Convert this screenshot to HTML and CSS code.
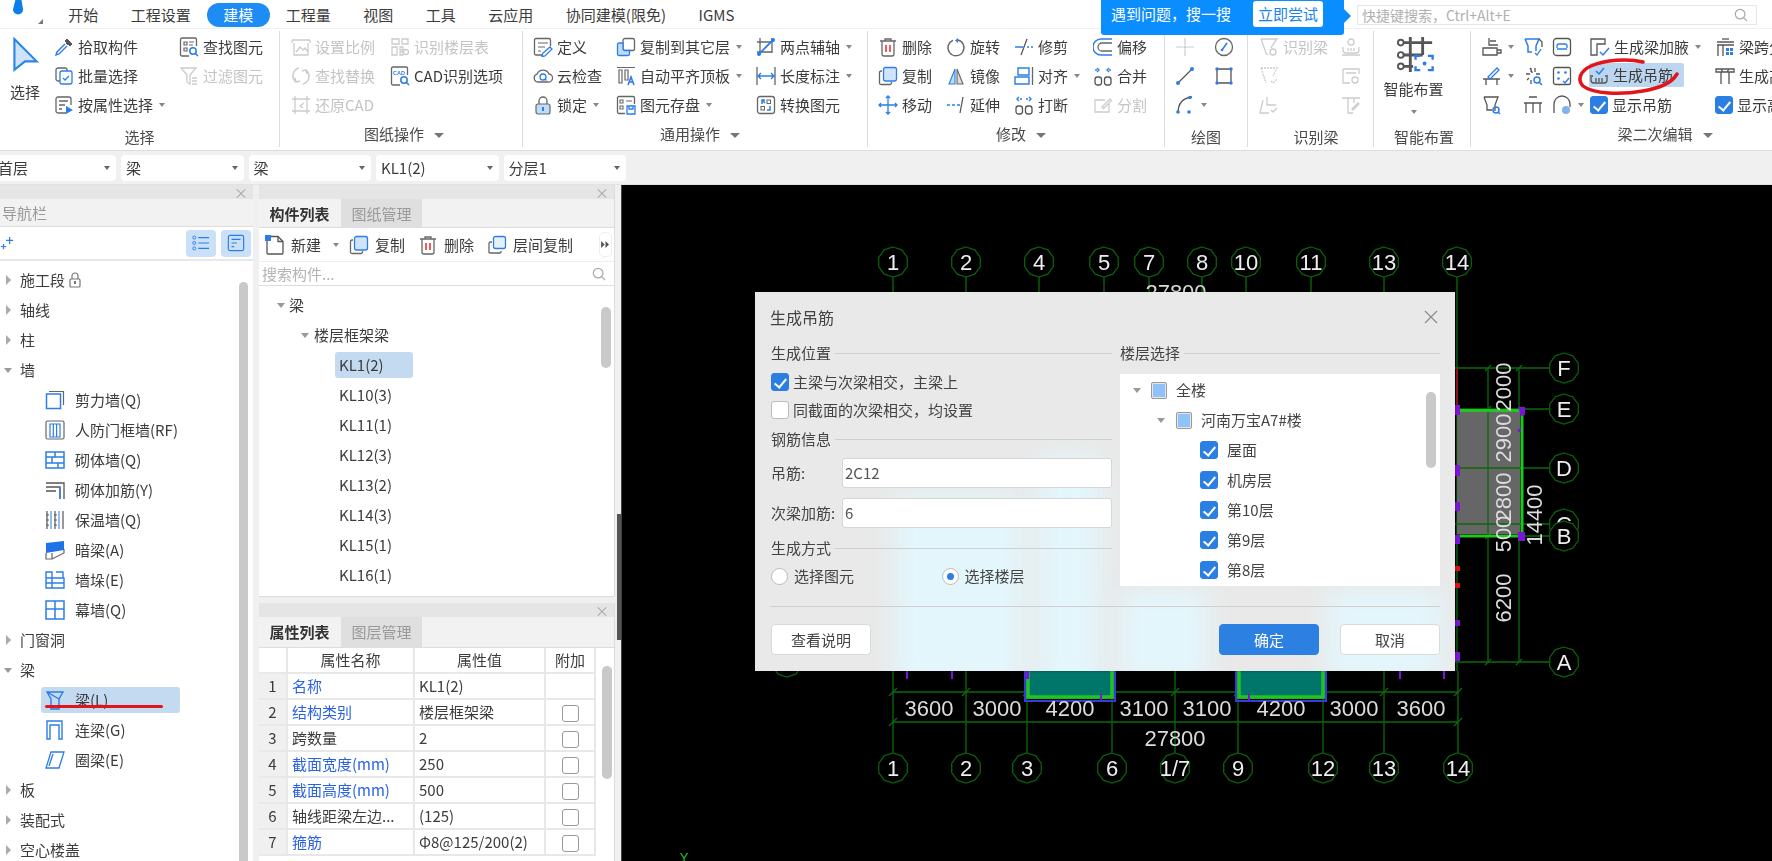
FILE: index.html
```html
<!DOCTYPE html>
<html lang="zh">
<head>
<meta charset="utf-8">
<title>生成吊筋</title>
<link rel="stylesheet" href="styles.css">
</head>
<body>
<svg class="sprite" aria-hidden="true">
<defs>
<symbol id="i-pick" viewBox="0 0 20 20"><path d="M11 4l2-2 5 5-2 2zM12 6l2 2" fill="#555" stroke="#555"/><path d="M11 7l-8 8-1 3 3-1 8-8" fill="none" stroke="#2b7de9" stroke-width="1.4"/></symbol>
<symbol id="i-batch" viewBox="0 0 20 20"><rect x="2" y="2" width="11" height="13" rx="2" fill="none" stroke="#666" stroke-width="1.3"/><rect x="6" y="5" width="12" height="13" rx="2" fill="#fff" stroke="#2b7de9" stroke-width="1.3"/><path d="M9 12l2 2 4-4" fill="none" stroke="#2b7de9" stroke-width="1.3"/></symbol>
<symbol id="i-attr" viewBox="0 0 20 20"><path d="M12 18H4a2 2 0 0 1-2-2V4a2 2 0 0 1 2-2h11a2 2 0 0 1 2 2v6" fill="none" stroke="#666" stroke-width="1.3"/><path d="M5 6h9M5 10h6M5 14h3" stroke="#666" stroke-width="1.3"/><path d="M12 11l7 4-7 4z" fill="#2b7de9"/></symbol>
<symbol id="i-find" viewBox="0 0 20 20"><path d="M10 19H3a1.500 1.500 0 0 1-1.500-1.500V2.500A1.500 1.500 0 0 1 3 1h13a1.500 1.500 0 0 1 1.500 1.500V9" fill="none" stroke="#666" stroke-width="1.3"/><path d="M5 5h3v3H5zM10 5h5M5 11h3v3H5zM10 8h4" fill="none" stroke="#666" stroke-width="1.2"/><circle cx="14" cy="14" r="3.200" fill="none" stroke="#2b7de9" stroke-width="1.500"/><path d="M16 16l3 3" stroke="#2b7de9" stroke-width="1.500"/></symbol>
<symbol id="i-filter" viewBox="0 0 20 20"><path d="M2 2h15l-6 7v9l-3-2V9z M13 12h5M13 15h5M13 18h5" fill="none" stroke="#ccc" stroke-width="1.3"/></symbol>
<symbol id="i-scale" viewBox="0 0 20 20"><path d="M1 3h18M1 3v3M19 3v3M3 6v12h14V6M5 15l4-5 3 3 2-2 3 4" fill="none" stroke="#ccc" stroke-width="1.3"/></symbol>
<symbol id="i-ltable" viewBox="0 0 20 20"><path d="M2 2h7v5H2zM12 2h6v5h-6zM2 10h5v8H2zM10 10h3v3h-3zM10 15h3v3h-3z" fill="none" stroke="#ccc" stroke-width="1.3"/><circle cx="16" cy="15" r="2.500" fill="none" stroke="#ccc" stroke-width="1.3"/></symbol>
<symbol id="i-replace" viewBox="0 0 20 20"><path d="M8 2a8 8 0 0 0-3 14M12 18a8 8 0 0 0 3-14M4 12l1 4 4-1M16 8l-1-4-4 1" fill="none" stroke="#ccc" stroke-width="1.5"/></symbol>
<symbol id="i-restore" viewBox="0 0 20 20"><path d="M4 1v18M16 1v18M1 4h18M1 16h18M13 8l-4 3 3 2" fill="none" stroke="#ccc" stroke-width="1.3"/></symbol>
<symbol id="i-cad" viewBox="0 0 20 20"><path d="M10 19H3a1.500 1.500 0 0 1-1.500-1.500V2.500A1.500 1.500 0 0 1 3 1h13a1.500 1.500 0 0 1 1.500 1.500V9" fill="none" stroke="#666" stroke-width="1.3"/><text x="3" y="8.500" font-family="Liberation Sans" font-size="5.500" font-weight="700" fill="#2b7de9">CAD</text><circle cx="14" cy="14" r="3.200" fill="none" stroke="#2b7de9" stroke-width="1.500"/><path d="M16 16l3 3" stroke="#2b7de9" stroke-width="1.500"/></symbol>
<symbol id="i-def" viewBox="0 0 20 20"><path d="M9 18H3a1.500 1.500 0 0 1-1.500-1.500V3A1.500 1.500 0 0 1 3 1.500h13A1.500 1.500 0 0 1 17.500 3v6" fill="none" stroke="#666" stroke-width="1.3"/><path d="M5 6h10M5 10h7M5 14h3" stroke="#666" stroke-width="1.2"/><path d="M17 10l2 2-7 7-3 .5.5-3z" fill="none" stroke="#2b7de9" stroke-width="1.300"/></symbol>
<symbol id="i-cloud" viewBox="0 0 20 20"><path d="M5 16a4 4 0 0 1-1-7.800A6.500 6.500 0 0 1 16 8a4 4 0 0 1-1 8z" fill="none" stroke="#666" stroke-width="1.3"/><circle cx="10" cy="11" r="3" fill="none" stroke="#2b7de9" stroke-width="1.300"/><path d="M12 13l1.500 1.500" stroke="#2b7de9" stroke-width="1.300"/></symbol>
<symbol id="i-lock" viewBox="0 0 20 20"><path d="M6 9V6a4 4 0 0 1 8 0v3" fill="none" stroke="#666" stroke-width="1.3"/><rect x="3" y="9" width="14" height="10" rx="2" fill="#bfdcf8" stroke="#666" stroke-width="1.200"/><rect x="9" y="12" width="2" height="4" fill="#2b7de9"/></symbol>
<symbol id="i-copy" viewBox="0 0 20 20"><path d="M4 5H3a1.500 1.500 0 0 0-1.500 1.500V17A1.500 1.500 0 0 0 3 18.500h9a1.500 1.500 0 0 0 1.500-1.500v-1" fill="none" stroke="#666" stroke-width="1.3"/><rect x="5.500" y="1.500" width="13" height="13.500" rx="2" fill="#cfe4fa" stroke="#2b7de9" stroke-width="1.300"/></symbol>
<symbol id="i-copyto" viewBox="0 0 20 20"><rect x="7" y="1.500" width="11.500" height="12" rx="2" fill="#fff" stroke="#666" stroke-width="1.300"/><path d="M7 6H3a1.500 1.500 0 0 0-1.500 1.500V17A1.500 1.500 0 0 0 3 18.500h9a1.500 1.500 0 0 0 1.500-1.500v-3.500H8.500A1.500 1.500 0 0 1 7 12z" fill="#bfdcf8" stroke="#2b7de9" stroke-width="1.300"/></symbol>
<symbol id="i-top" viewBox="0 0 20 20"><path d="M1 1.500h18M3 4h3v13H3zM9 4h3v10H9z" fill="none" stroke="#666" stroke-width="1.200"/><path d="M12 19l3-8 3 8M13.200 16h3.600" fill="none" stroke="#2b7de9" stroke-width="1.600"/></symbol>
<symbol id="i-save" viewBox="0 0 20 20"><path d="M9 18.500H3A1.500 1.500 0 0 1 1.500 17V3A1.500 1.500 0 0 1 3 1.500h14A1.500 1.500 0 0 1 18.500 3v6" fill="none" stroke="#666" stroke-width="1.3"/><path d="M4 5h3v3H4zM10 6h6M4 11h3v3H4z" fill="none" stroke="#666" stroke-width="1.100"/><path d="M11 11h8v8h-8zM13 11v3h4v-3" fill="none" stroke="#2b7de9" stroke-width="1.300"/></symbol>
<symbol id="i-two" viewBox="0 0 20 20"><path d="M1 5h15M4 1v15M1 15h15M16 1v15" fill="none" stroke="#666" stroke-width="1.300"/><path d="M2 18L18 2" stroke="#2b7de9" stroke-width="1.800"/><circle cx="17" cy="3" r="2" fill="#2b7de9"/><circle cx="3" cy="17" r="2" fill="#2b7de9"/></symbol>
<symbol id="i-dim" viewBox="0 0 20 20"><path d="M1 1v18M19 1v18" stroke="#666" stroke-width="1.300"/><path d="M2 10h16M5 7l-3 3 3 3M15 7l3 3-3 3" fill="none" stroke="#2b7de9" stroke-width="1.400"/></symbol>
<symbol id="i-conv" viewBox="0 0 20 20"><rect x="1.500" y="1.500" width="17" height="17" rx="2.500" fill="none" stroke="#666" stroke-width="1.300"/><path d="M9 5H6v4M6 5l3 3M11 15h3v-4" fill="none" stroke="#2b7de9" stroke-width="1.500"/><rect x="11" y="5" width="3.500" height="3.500" fill="none" stroke="#666"/><rect x="5" y="11.500" width="3.500" height="3.500" fill="none" stroke="#666"/></symbol>
<symbol id="i-del" viewBox="0 0 20 20"><path d="M2 4h16M7 4V2h6v2M4 4v13a2 2 0 0 0 2 2h8a2 2 0 0 0 2-2V4" fill="none" stroke="#666" stroke-width="1.300"/><path d="M8 8v7M12 8v7" stroke="#e33" stroke-width="1.600"/></symbol>
<symbol id="i-rot" viewBox="0 0 20 20"><path d="M12 3a8 8 0 1 1-5 .3" fill="none" stroke="#666" stroke-width="1.300"/><path d="M12 1l-3 2.500 3 2.500z" fill="#2b7de9"/></symbol>
<symbol id="i-trim" viewBox="0 0 20 20"><path d="M1 10h8" stroke="#2b7de9" stroke-width="1.500"/><path d="M13 2L7 18" stroke="#555" stroke-width="1.300"/><path d="M13 10h2M17 10h2" stroke="#2b7de9" stroke-width="1.500"/></symbol>
<symbol id="i-off" viewBox="0 0 20 20"><path d="M19 2H8a7.500 7.500 0 0 0 0 16h11" fill="none" stroke="#2b7de9" stroke-width="1.400"/><path d="M19 6H9a4 4 0 0 0 0 8h10" fill="none" stroke="#666" stroke-width="1.300"/></symbol>
<symbol id="i-mir" viewBox="0 0 20 20"><path d="M9 3L3 18h6z" fill="#bfdcf8" stroke="#2b7de9" stroke-width="1.100"/><path d="M11 3l6 15h-6z" fill="#ddd" stroke="#666" stroke-width="1.100"/></symbol>
<symbol id="i-align" viewBox="0 0 20 20"><path d="M4 2h11v7H4zM1 11h14v7H1z" fill="none" stroke="#2b7de9" stroke-width="1.400"/><path d="M18.500 1v18" stroke="#666" stroke-width="1.300"/></symbol>
<symbol id="i-merge" viewBox="0 0 20 20"><rect x="2" y="11" width="6.500" height="8" rx="2.500" fill="none" stroke="#555" stroke-width="1.300"/><rect x="11.500" y="11" width="6.500" height="8" rx="2.500" fill="none" stroke="#555" stroke-width="1.300"/><path d="M4 2l2 2-2 2M16 2l-2 2 2 2M2 4h2M18 4h-2" fill="none" stroke="#2b7de9" stroke-width="1.400"/></symbol>
<symbol id="i-move" viewBox="0 0 20 20"><path d="M10 1v18M1 10h18M8 3l2-2 2 2M8 17l2 2 2-2M3 8l-2 2 2 2M17 8l2 2-2 2" fill="none" stroke="#2b7de9" stroke-width="1.300"/></symbol>
<symbol id="i-ext" viewBox="0 0 20 20"><path d="M1 10h3M6 10h3M11 10h3" stroke="#2b7de9" stroke-width="1.500"/><path d="M17 2l-3 16" stroke="#555" stroke-width="1.300"/></symbol>
<symbol id="i-break" viewBox="0 0 20 20"><rect x="2" y="11" width="6.500" height="8" rx="2.500" fill="none" stroke="#555" stroke-width="1.300"/><rect x="11.500" y="11" width="6.500" height="8" rx="2.500" fill="none" stroke="#555" stroke-width="1.300"/><path d="M5 2L3 4l2 2M15 2l2 2-2 2M6 4h2M14 4h-2" fill="none" stroke="#2b7de9" stroke-width="1.400"/></symbol>
<symbol id="i-split" viewBox="0 0 20 20"><path d="M12 5H2v12h14V9M9 12l8-8 1.500 1.500-8 8z" fill="none" stroke="#ccc" stroke-width="1.300"/></symbol>
<symbol id="i-cross" viewBox="0 0 20 20"><path d="M1 10h7M12 10h7M10 1v7M10 12v7" stroke="#ccc" stroke-width="1.200"/><circle cx="10" cy="10" r="1.500" fill="#ccc"/></symbol>
<symbol id="i-dial" viewBox="0 0 20 20"><circle cx="10" cy="10" r="8.500" fill="none" stroke="#666" stroke-width="1.300"/><path d="M8 13l5-7" stroke="#2b7de9" stroke-width="1.500"/><circle cx="8" cy="13" r="1.300" fill="#2b7de9"/></symbol>
<symbol id="i-line" viewBox="0 0 20 20"><path d="M3 17L17 3" stroke="#555" stroke-width="1.300"/><circle cx="3" cy="17" r="2" fill="#2b7de9"/><circle cx="17" cy="3" r="2" fill="#2b7de9"/></symbol>
<symbol id="i-rect" viewBox="0 0 20 20"><rect x="3" y="3" width="14" height="14" rx="1.500" fill="none" stroke="#555" stroke-width="1.300"/><circle cx="3" cy="3" r="1.700" fill="#2b7de9"/><circle cx="17" cy="3" r="1.700" fill="#2b7de9"/><circle cx="3" cy="17" r="1.700" fill="#2b7de9"/><circle cx="17" cy="17" r="1.700" fill="#2b7de9"/></symbol>
<symbol id="i-arc" viewBox="0 0 20 20"><path d="M3 18C3 8 8 3 17 2" fill="none" stroke="#555" stroke-width="1.300"/><circle cx="3" cy="17" r="1.800" fill="#2b7de9"/><circle cx="15" cy="2.500" r="1.800" fill="#2b7de9"/><circle cx="14" cy="17" r="1.800" fill="#2b7de9"/></symbol>
<symbol id="i-recb" viewBox="0 0 20 20"><path d="M2 2h16l-5 7-1 2M2 2l5 14 2 2" fill="none" stroke="#ccc" stroke-width="1.300"/><circle cx="14" cy="15" r="3" fill="none" stroke="#ccc" stroke-width="1.300"/></symbol>
<symbol id="i-recd" viewBox="0 0 20 20"><path d="M2 2h16l-4 8M2 2l5 15M12 15l2 2 4-4" fill="none" stroke="#ccc" stroke-dasharray="2 1" stroke-width="1.300"/></symbol>
<symbol id="i-rece" viewBox="0 0 20 20"><path d="M8 2v8h9M4 5L1 18h9M12 15l2 2 4-4" fill="none" stroke="#ccc" stroke-width="1.300"/></symbol>
<symbol id="i-rech" viewBox="0 0 20 20"><circle cx="10" cy="5" r="3" fill="none" stroke="#ccc" stroke-width="1.300"/><path d="M2 10v3a3 3 0 0 0 3 3h10a3 3 0 0 0 3-3v-3M1 18h18M7 11v3M10 11v3M13 11v3" fill="none" stroke="#ccc" stroke-width="1.300"/></symbol>
<symbol id="i-recq" viewBox="0 0 20 20"><path d="M2 3h16v5M2 3v14h7M5 7h10" fill="none" stroke="#ccc" stroke-width="1.300"/><circle cx="14" cy="14" r="3" fill="none" stroke="#ccc" stroke-width="1.300"/></symbol>
<symbol id="i-rect2" viewBox="0 0 20 20"><path d="M1 3h18M7 3v15h5M13 3v5M11 14l6-6 1 1-6 6z" fill="none" stroke="#ccc" stroke-width="1.300"/></symbol>
<symbol id="i-smart" viewBox="0 0 40 40"><path d="M5 8h32M5 21h22M5 33h12M14 2v37M27 2v19" fill="none" stroke="#555" stroke-width="3"/><circle cx="4" cy="8" r="3" fill="#fff" stroke="#555" stroke-width="2"/><circle cx="4" cy="21" r="3" fill="#fff" stroke="#555" stroke-width="2"/><circle cx="4" cy="33" r="3" fill="#fff" stroke="#555" stroke-width="2"/><path d="M20 28v-4h5M33 24h5v4M38 35v4h-5M25 39h-5v-4" transform="translate(-.5 -2)" fill="none" stroke="#2b7de9" stroke-width="2.500"/><circle cx="29" cy="30" r="2" fill="#2b7de9"/></symbol>
<symbol id="i-e1" viewBox="0 0 20 20"><path d="M7 1v7h9M8 4h6" fill="none" stroke="#555" stroke-width="1.300"/><path d="M1 11h14v7H1zM15 13h4v3h-4z" fill="none" stroke="#555" stroke-width="1.300"/></symbol>
<symbol id="i-e2" viewBox="0 0 20 20"><path d="M2 2h14l-3 7v5M2 2l3 7v6h4" fill="none" stroke="#2b7de9" stroke-width="1.500"/><path d="M12 16l2 2 4-6" fill="none" stroke="#2b7de9" stroke-width="1.300"/><path d="M16 2l3 3v5" fill="none" stroke="#555" stroke-width="1.300"/></symbol>
<symbol id="i-e3" viewBox="0 0 20 20"><rect x="1.500" y="1.500" width="17" height="17" rx="3" fill="none" stroke="#555" stroke-width="1.300"/><path d="M5 11V9a2 2 0 0 1 2-2h6a2 2 0 0 1 2 2v2M5 12h10" fill="none" stroke="#2b7de9" stroke-width="1.300"/></symbol>
<symbol id="i-e4" viewBox="0 0 20 20"><path d="M1 2h14v5H7v11H1zM7 7v11" fill="none" stroke="#555" stroke-width="1.300"/><path d="M10 15l3 3 6-7" fill="none" stroke="#2b7de9" stroke-width="1.500"/></symbol>
<symbol id="i-e5" viewBox="0 0 20 20"><path d="M2 5h17M2 8h17M3 8v11M8 8v11" fill="none" stroke="#555" stroke-width="1.300"/><path d="M7 2h7" stroke="#555" stroke-width="1.300"/><path d="M11 11h3v3h-3zM15 11h3v3h-3zM11 15h3v3h-3zM15 15h3v3h-3z" fill="#2b7de9"/></symbol>
<symbol id="i-e6" viewBox="0 0 20 20"><path d="M1 13h17M4 13v6M15 13v6" fill="none" stroke="#555" stroke-width="1.300"/><path d="M6 11l9-9 2 2-9 9z" fill="none" stroke="#2b7de9" stroke-width="1.300"/></symbol>
<symbol id="i-e7" viewBox="0 0 20 20"><path d="M7 2l2 4-1 0 M3 8h4M13 8h4M8 2v4M12 2v4M8 14v4M4 14l2-2" fill="none" stroke="#555" stroke-width="1.300"/><circle cx="14" cy="14" r="3" fill="none" stroke="#2b7de9" stroke-width="1.500"/><path d="M16 16l3 3" stroke="#2b7de9" stroke-width="1.500"/></symbol>
<symbol id="i-e8" viewBox="0 0 20 20"><rect x="1.500" y="1.500" width="17" height="17" rx="2" fill="none" stroke="#555" stroke-width="1.300"/><circle cx="6.500" cy="6.500" r="1.300" fill="#2b7de9"/><circle cx="13.500" cy="6.500" r="1.300" fill="#2b7de9"/><circle cx="6.500" cy="12.500" r="1.300" fill="#2b7de9"/><path d="M11 15l2 2 4-5" fill="#fff" stroke="#2b7de9" stroke-width="1.400"/></symbol>
<symbol id="i-hang" viewBox="0 0 20 20"><path d="M2 12v3a3 3 0 0 0 3 3h10a3 3 0 0 0 3-3v-3M7 13v4M10 13v4M13 13v4M1 11h3M16 11h3" fill="none" stroke="#555" stroke-width="1.300"/><path d="M7 6l3 3 5-6" fill="none" stroke="#2b7de9" stroke-width="1.500"/></symbol>
<symbol id="i-e9" viewBox="0 0 20 20"><path d="M1 3h18v3H1zM4 6h12M6 6v12M14 6v12M6 3l2 3M14 3l-2 3" fill="none" stroke="#555" stroke-width="1.300"/></symbol>
<symbol id="i-e10" viewBox="0 0 20 20"><path d="M2 2h14l-3 8v6M2 2l3 8v5h5" fill="none" stroke="#555" stroke-width="1.300"/><circle cx="14" cy="15" r="3" fill="none" stroke="#2b7de9" stroke-width="1.500"/><path d="M16 17l2 2" stroke="#2b7de9" stroke-width="1.500"/></symbol>
<symbol id="i-e11" viewBox="0 0 20 20"><path d="M1 8h18M6 2h8M3 8v10M10 8v10M17 8v10" fill="none" stroke="#555" stroke-width="1.300"/></symbol>
<symbol id="i-e12" viewBox="0 0 20 20"><path d="M2 18V9a8 8 0 0 1 16 0v3" fill="none" stroke="#555" stroke-width="1.300"/><circle cx="14" cy="15" r="4" fill="#7fb3ee"/></symbol>
<symbol id="n-shear" viewBox="0 0 20 20"><rect x="1.500" y="4" width="14" height="14.500" fill="none" stroke="#2b7de9" stroke-width="1.500"/><path d="M4 1.500h14.500V15" fill="none" stroke="#666" stroke-width="1.200"/></symbol>
<symbol id="n-civil" viewBox="0 0 20 20"><rect x="1" y="1" width="18" height="18" rx="1.500" fill="none" stroke="#666" stroke-width="1.200"/><path d="M5 4h10v13H5zM8.300 4v13M11.600 4v13" fill="none" stroke="#2b7de9" stroke-width="1.200"/></symbol>
<symbol id="n-brick" viewBox="0 0 20 20"><path d="M1 2h18v16H1zM1 7h18M1 13h18M10 2v5M7 7v6M13 13v5" fill="none" stroke="#2b7de9" stroke-width="1.500"/></symbol>
<symbol id="n-rebar" viewBox="0 0 20 20"><path d="M1 3h18v16M1 7h14v12M1 11h10" fill="none" stroke="#555" stroke-width="1.300"/><path d="M15 7v12" stroke="#2b7de9" stroke-width="1.300"/></symbol>
<symbol id="n-ins" viewBox="0 0 20 20"><path d="M2 1v18M10 1v18M18 1v18" stroke="#555" stroke-width="1.200"/><path d="M1 5h3M1 10h3M1 15h3M9 5h3M9 10h3M9 15h3" stroke="#555" stroke-width="1"/><path d="M6 1v18M14 1v18" stroke="#2b7de9" stroke-width="1"/></symbol>
<symbol id="n-hide" viewBox="0 0 20 20"><path d="M1 3l18-2v9L1 13z" fill="#1f73e6"/><path d="M1 13v6h6l12-6V9M7 13v6" fill="none" stroke="#666" stroke-width="1.200"/></symbol>
<symbol id="n-pier" viewBox="0 0 20 20"><path d="M1 2h6v6H1zM11 2h7v6M1 8h18v10H1zM7 8v10M1 13h18" fill="none" stroke="#2b7de9" stroke-width="1.400"/></symbol>
<symbol id="n-curt" viewBox="0 0 20 20"><path d="M1 1h18v18H1zM1 9h18M10 1v18" fill="none" stroke="#2b7de9" stroke-width="1.500"/></symbol>
<symbol id="n-beam" viewBox="0 0 20 20"><path d="M2 2h16l-4 7v10H6V9z M2 2l12 7" fill="none" stroke="#2b7de9" stroke-width="1.400"/></symbol>
<symbol id="n-lint" viewBox="0 0 20 20"><path d="M2 19V1h15v18h-3V5H5v14z" fill="none" stroke="#2b7de9" stroke-width="1.400"/></symbol>
<symbol id="n-ring" viewBox="0 0 20 20"><path d="M6 2h13l-5 16H1zM8 4L4 16" fill="none" stroke="#2b7de9" stroke-width="1.300"/></symbol>
<symbol id="t-new" viewBox="0 0 20 20"><path d="M4 1.500h9l5 5V18a1 1 0 0 1-1 1H3a1 1 0 0 1-1-1V3" fill="none" stroke="#555" stroke-width="1.300"/><path d="M13 1.500v5h5" fill="none" stroke="#555" stroke-width="1.300"/><rect x="0" y="0" width="6" height="6" fill="#2b7de9"/></symbol>
<symbol id="t-lay" viewBox="0 0 20 20"><path d="M5 7H3.500A1.500 1.500 0 0 0 2 8.500V17a1 1 0 0 0 1 1h10a1 1 0 0 0 1-1v-1M2 10v8" fill="none" stroke="#666" stroke-width="1.300"/><rect x="6.500" y="1.500" width="12" height="12" rx="2" fill="#e6f0fb" stroke="#2b7de9" stroke-width="1.300"/></symbol>
<symbol id="g-bub" viewBox="-16 -16 32 32"><polygon points="0,-15 8.800,-12.100 14.300,-4.600 14.300,4.600 8.800,12.100 0,15 -8.800,12.100 -14.300,4.600 -14.300,-4.600 -8.800,-12.100" fill="#000" stroke="#0b5f0b" stroke-width="1.300"/></symbol>
</defs>
</svg>

<div class="app">
  <header class="tabbar">
    <div class="logo"><svg class="drop" viewBox="0 0 12 22"><path d="M3 0h6l2 12a5.500 5.500 0 0 1-11 0z" fill="#0b7fe8"/></svg><span class="corner"></span></div>
    <span class="tab">开始</span><span class="tab">工程设置</span><span class="tab active">建模</span><span class="tab">工程量</span><span class="tab">视图</span><span class="tab">工具</span><span class="tab">云应用</span><span class="tab">协同建模(限免)</span><span class="tab">IGMS</span>
    <div class="quick"><span>快捷键搜索，Ctrl+Alt+E</span><svg class="mag" viewBox="0 0 16 16"><circle cx="7" cy="7" r="5.500"/><path d="M11 11l4 4"/></svg></div>
  </header>

  <div class="ribbon">
    <section class="group g1">
      <div class="grid">
        <div class="big"><svg class="arrow" viewBox="0 0 26 34"><path d="M3 2l21 21-11 0-10 8z" fill="#cfe4fa" stroke="#2b85e9" stroke-width="2"/></svg><span>选择</span></div>
        <div class="ri"><svg class="ic"><use href="#i-pick"/></svg>拾取构件</div>
        <div class="ri"><svg class="ic"><use href="#i-batch"/></svg>批量选择</div>
        <div class="ri"><svg class="ic"><use href="#i-attr"/></svg>按属性选择<i class="car"></i></div>
        <div class="ri"><svg class="ic"><use href="#i-find"/></svg>查找图元</div>
        <div class="ri off"><svg class="ic"><use href="#i-filter"/></svg>过滤图元</div>
      </div>
      <div class="lbl low">选择</div>
    </section>
    <section class="group g2">
      <div class="grid">
        <div class="ri off"><svg class="ic"><use href="#i-scale"/></svg>设置比例</div>
        <div class="ri off"><svg class="ic"><use href="#i-replace"/></svg>查找替换</div>
        <div class="ri off"><svg class="ic"><use href="#i-restore"/></svg>还原CAD</div>
        <div class="ri off"><svg class="ic"><use href="#i-ltable"/></svg>识别楼层表</div>
        <div class="ri"><svg class="ic"><use href="#i-cad"/></svg>CAD识别选项</div>
      </div>
      <div class="lbl">图纸操作<i class="car dark"></i></div>
    </section>
    <section class="group g3">
      <div class="grid">
        <div class="ri"><svg class="ic"><use href="#i-def"/></svg>定义</div>
        <div class="ri"><svg class="ic"><use href="#i-cloud"/></svg>云检查</div>
        <div class="ri"><svg class="ic"><use href="#i-lock"/></svg>锁定<i class="car"></i></div>
        <div class="ri"><svg class="ic"><use href="#i-copyto"/></svg>复制到其它层<i class="car"></i></div>
        <div class="ri"><svg class="ic"><use href="#i-top"/></svg>自动平齐顶板<i class="car"></i></div>
        <div class="ri"><svg class="ic"><use href="#i-save"/></svg>图元存盘<i class="car"></i></div>
        <div class="ri"><svg class="ic"><use href="#i-two"/></svg>两点辅轴<i class="car"></i></div>
        <div class="ri"><svg class="ic"><use href="#i-dim"/></svg>长度标注<i class="car"></i></div>
        <div class="ri"><svg class="ic"><use href="#i-conv"/></svg>转换图元</div>
      </div>
      <div class="lbl">通用操作<i class="car dark"></i></div>
    </section>
    <section class="group g4">
      <div class="grid">
        <div class="ri"><svg class="ic"><use href="#i-del"/></svg>删除</div>
        <div class="ri"><svg class="ic"><use href="#i-copy"/></svg>复制</div>
        <div class="ri"><svg class="ic"><use href="#i-move"/></svg>移动</div>
        <div class="ri"><svg class="ic"><use href="#i-rot"/></svg>旋转</div>
        <div class="ri"><svg class="ic"><use href="#i-mir"/></svg>镜像</div>
        <div class="ri"><svg class="ic"><use href="#i-ext"/></svg>延伸</div>
        <div class="ri"><svg class="ic"><use href="#i-trim"/></svg>修剪</div>
        <div class="ri"><svg class="ic"><use href="#i-align"/></svg>对齐<i class="car"></i></div>
        <div class="ri"><svg class="ic"><use href="#i-break"/></svg>打断</div>
        <div class="ri"><svg class="ic"><use href="#i-off"/></svg>偏移</div>
        <div class="ri"><svg class="ic"><use href="#i-merge"/></svg>合并</div>
        <div class="ri off"><svg class="ic"><use href="#i-split"/></svg>分割</div>
      </div>
      <div class="lbl">修改<i class="car dark"></i></div>
    </section>
    <section class="group g5">
      <div class="grid">
        <div class="ri"><svg class="ic"><use href="#i-cross"/></svg></div>
        <div class="ri"><svg class="ic"><use href="#i-line"/></svg></div>
        <div class="ri"><svg class="ic"><use href="#i-arc"/></svg><i class="car"></i></div>
        <div class="ri"><svg class="ic"><use href="#i-dial"/></svg></div>
        <div class="ri"><svg class="ic"><use href="#i-rect"/></svg></div>
      </div>
      <div class="lbl low">绘图</div>
    </section>
    <section class="group g6">
      <div class="grid">
        <div class="ri off"><svg class="ic"><use href="#i-recb"/></svg>识别梁</div>
        <div class="ri off"><svg class="ic"><use href="#i-recd"/></svg></div>
        <div class="ri off"><svg class="ic"><use href="#i-rece"/></svg></div>
        <div class="ri off"><svg class="ic"><use href="#i-rech"/></svg></div>
        <div class="ri off"><svg class="ic"><use href="#i-recq"/></svg></div>
        <div class="ri off"><svg class="ic"><use href="#i-rect2"/></svg></div>
      </div>
      <div class="lbl low">识别梁</div>
    </section>
    <section class="group g7">
      <div class="big wide"><svg class="smart"><use href="#i-smart"/></svg><span>智能布置</span><i class="car"></i></div>
      <div class="lbl low">智能布置</div>
    </section>
    <section class="group g8">
      <div class="grid">
        <div class="ri"><svg class="ic"><use href="#i-e1"/></svg><i class="car"></i></div>
        <div class="ri"><svg class="ic"><use href="#i-e6"/></svg><i class="car"></i></div>
        <div class="ri"><svg class="ic"><use href="#i-e10"/></svg></div>
        <div class="ri"><svg class="ic"><use href="#i-e2"/></svg></div>
        <div class="ri"><svg class="ic"><use href="#i-e7"/></svg></div>
        <div class="ri"><svg class="ic"><use href="#i-e11"/></svg></div>
        <div class="ri"><svg class="ic"><use href="#i-e3"/></svg></div>
        <div class="ri"><svg class="ic"><use href="#i-e8"/></svg></div>
        <div class="ri"><svg class="ic"><use href="#i-e12"/></svg><i class="car"></i></div>
        <div class="ri"><svg class="ic"><use href="#i-e4"/></svg>生成梁加腋<i class="car wide-gap"></i></div>
        <div class="ri hl"><svg class="ic"><use href="#i-hang"/></svg>生成吊筋</div>
        <div class="ri"><span class="cb on"></span>显示吊筋</div>
        <div class="ri"><svg class="ic"><use href="#i-e5"/></svg>梁跨分层</div>
        <div class="ri"><svg class="ic"><use href="#i-e9"/></svg>生成高强</div>
        <div class="ri"><span class="cb on"></span>显示高强</div>
      </div>
      <div class="lbl shift">梁二次编辑<i class="car dark"></i></div>
    </section>
  </div>

  <div class="selectbar">
    <div class="sel first">首层</div><div class="sel">梁</div><div class="sel">梁</div><div class="sel">KL1(2)</div><div class="sel">分层1</div>
  </div>

  <main class="work">
    <aside class="nav panel">
      <div class="strip"><span class="x">×</span></div>
      <div class="navtitle">导航栏</div>
      <div class="navtools">
        <svg class="spark" viewBox="0 0 16 16"><path d="M11 1v8M7 5h8M4 9v6M1 12h6" stroke="#2b7de9" stroke-width="1.400" fill="none"/></svg>
        <span class="tbtn"><svg viewBox="0 0 20 20"><path d="M7 4h12M7 10h12M7 16h12" stroke="#2b7de9" stroke-width="1.300"/><circle cx="2.500" cy="4" r="1.700" fill="none" stroke="#2b7de9"/><circle cx="2.500" cy="10" r="1.700" fill="none" stroke="#2b7de9"/><circle cx="2.500" cy="16" r="1.700" fill="none" stroke="#2b7de9"/></svg></span>
        <span class="tbtn"><svg viewBox="0 0 20 20"><rect x="1.500" y="1.500" width="17" height="17" rx="2" fill="none" stroke="#2b7de9" stroke-width="1.300"/><path d="M5 6h10M5 10h6M5 14h3" stroke="#2b7de9" stroke-width="1.300"/></svg></span>
      </div>
      <div class="navbody">
        <div class="navlist">
          <div class="nrow"><i class="tr"></i>施工段<svg class="pad" viewBox="0 0 12 16"><path d="M3 7V4a3 3 0 0 1 6 0v3" fill="none" stroke="#777" stroke-width="1.200"/><rect x="1" y="7" width="10" height="8" rx="1" fill="none" stroke="#777" stroke-width="1.200"/><rect x="5" y="9" width="2" height="3" fill="#777"/></svg></div>
          <div class="nrow"><i class="tr"></i>轴线</div>
          <div class="nrow"><i class="tr"></i>柱</div>
          <div class="nrow"><i class="td"></i>墙</div>
          <div class="nrow sub"><svg class="ic"><use href="#n-shear"/></svg>剪力墙(Q)</div>
          <div class="nrow sub"><svg class="ic"><use href="#n-civil"/></svg>人防门框墙(RF)</div>
          <div class="nrow sub"><svg class="ic"><use href="#n-brick"/></svg>砌体墙(Q)</div>
          <div class="nrow sub"><svg class="ic"><use href="#n-rebar"/></svg>砌体加筋(Y)</div>
          <div class="nrow sub"><svg class="ic"><use href="#n-ins"/></svg>保温墙(Q)</div>
          <div class="nrow sub"><svg class="ic"><use href="#n-hide"/></svg>暗梁(A)</div>
          <div class="nrow sub"><svg class="ic"><use href="#n-pier"/></svg>墙垛(E)</div>
          <div class="nrow sub"><svg class="ic"><use href="#n-curt"/></svg>幕墙(Q)</div>
          <div class="nrow"><i class="tr"></i>门窗洞</div>
          <div class="nrow"><i class="td"></i>梁</div>
          <div class="nrow sub"><div class="selrow"><svg class="ic"><use href="#n-beam"/></svg>梁(L)<span class="redline"></span></div></div>
          <div class="nrow sub"><svg class="ic"><use href="#n-lint"/></svg>连梁(G)</div>
          <div class="nrow sub"><svg class="ic"><use href="#n-ring"/></svg>圈梁(E)</div>
          <div class="nrow"><i class="tr"></i>板</div>
          <div class="nrow"><i class="tr"></i>装配式</div>
          <div class="nrow"><i class="tr"></i>空心楼盖</div>
        </div>
        <div class="navscroll"><span class="thumb"></span></div>
      </div>
    </aside>

    <div class="midcol">
      <section class="panel comp">
        <div class="strip"><span class="x">×</span></div>
        <div class="tabs"><span class="ptab on">构件列表</span><span class="ptab">图纸管理</span></div>
        <div class="ptools">
          <span class="pt"><svg class="ic"><use href="#t-new"/></svg>新建<i class="car"></i></span>
          <span class="pt"><svg class="ic"><use href="#i-copy"/></svg>复制</span>
          <span class="pt"><svg class="ic"><use href="#i-del"/></svg>删除</span>
          <span class="pt"><svg class="ic"><use href="#t-lay"/></svg>层间复制</span>
          <span class="more"><svg viewBox="0 0 10 8"><path d="M0 0l4 4-4 4zM5 0l4 4-4 4z" fill="#555"/></svg></span>
        </div>
        <div class="psearch"><span>搜索构件...</span><svg class="mag" viewBox="0 0 16 16"><circle cx="7" cy="7" r="5.500"/><path d="M11 11l4 4"/></svg></div>
        <div class="ptree">
          <div class="treelist">
            <div class="trow l1"><i class="td"></i>梁</div>
            <div class="trow l2"><i class="td"></i>楼层框架梁</div>
            <div class="trow l3"><span class="kl sel-kl">KL1(2)</span></div>
            <div class="trow l3"><span class="kl">KL10(3)</span></div>
            <div class="trow l3"><span class="kl">KL11(1)</span></div>
            <div class="trow l3"><span class="kl">KL12(3)</span></div>
            <div class="trow l3"><span class="kl">KL13(2)</span></div>
            <div class="trow l3"><span class="kl">KL14(3)</span></div>
            <div class="trow l3"><span class="kl">KL15(1)</span></div>
            <div class="trow l3"><span class="kl">KL16(1)</span></div>
          </div>
          <div class="treescroll"><span class="thumb"></span></div>
        </div>
      </section>
      <section class="panel props">
        <div class="strip"><span class="x">×</span></div>
        <div class="tabs tall"><span class="ptab on">属性列表</span><span class="ptab">图层管理</span></div>
        <div class="propbody">
          <table class="ptable">
            <colgroup><col class="c1"><col class="c2"><col class="c3"><col class="c4"></colgroup>
            <thead><tr><th></th><th>属性名称</th><th>属性值</th><th>附加</th></tr></thead>
            <tbody>
              <tr><td class="n">1</td><td class="link">名称</td><td>KL1(2)</td><td></td></tr>
              <tr><td class="n">2</td><td class="link">结构类别</td><td>楼层框架梁</td><td><span class="pcb"></span></td></tr>
              <tr><td class="n">3</td><td>跨数量</td><td>2</td><td><span class="pcb"></span></td></tr>
              <tr><td class="n">4</td><td class="link">截面宽度(mm)</td><td>250</td><td><span class="pcb"></span></td></tr>
              <tr><td class="n">5</td><td class="link">截面高度(mm)</td><td>500</td><td><span class="pcb"></span></td></tr>
              <tr><td class="n">6</td><td>轴线距梁左边...</td><td>(125)</td><td><span class="pcb"></span></td></tr>
              <tr><td class="n">7</td><td class="link">箍筋</td><td>Φ8@125/200(2)</td><td><span class="pcb"></span></td></tr>
            </tbody>
          </table>
          <div class="propscroll"><span class="thumb"></span></div>
        </div>
      </section>
    </div>

    <div class="split"><span class="handle"></span></div>

    <div class="canvas">
      <svg class="cad" viewBox="622 185 1150 676" width="1150" height="676">
        <g class="ln">
          <path d="M893 277V292M966 277V292M1039 277V292M1104 277V292M1149 277V292M1202 277V292M1246 277V292M1311 277V292M1384 277V292M1457 277V671"/>
          <path d="M893 671V753M966 671V753M1027 671V753M1112 671V753M1175 671V753M1238 671V753M1323 671V753M1384 671V753M1458 671V753"/>
          <path d="M893 692H1458M893 722H1458"/>
          <path d="M889 696l8-8M962 696l8-8M1023 696l8-8M1108 696l8-8M1171 696l8-8M1234 696l8-8M1319 696l8-8M1380 696l8-8M1454 696l8-8M889 726l8-8M1454 726l8-8"/>
          <path d="M1455 368H1549M1455 409H1549M1455 468H1549M1455 524H1549M1455 536H1549M1455 662H1549"/>
          <path d="M1488 368V662M1519 368V662"/>
          <path d="M1485 371l6-6M1516 371l6-6M1485 412l6-6M1485 471l6-6M1485 527l6-6M1485 539l6-6M1485 665l6-6M1516 665l6-6"/>
        </g>
        <rect class="gray" x="1457" y="412" width="63" height="122"/>
        <path class="ln" d="M1457 468H1520M1488 412V534M1457 524H1520"/>
        <path class="grn" d="M1458 410.500H1521M1522 409V538M1458 536H1524"/>
        <path class="pur" d="M1518 407h7v8l-4 1zM1518 532h7v9h-7zM1518 429h3v3h-3z"/>
        <path class="red" d="M1457 368V409M1457 570h3M1457 622h3"/>
        <rect class="pur" x="1455" y="405" width="5" height="10"/>
        <rect class="pur" x="1455" y="465" width="5" height="11"/>
        <rect class="pur" x="1455" y="502" width="5" height="9"/>
        <rect class="pur" x="1455" y="535" width="5" height="9"/>
        <rect class="pur" x="1455" y="620" width="5" height="6"/>
        <rect class="pur" x="1455" y="652" width="5" height="9"/>
        <rect class="redf" x="1455" y="566" width="5" height="5"/>
        <rect class="redf" x="1455" y="583" width="5" height="5"/>
        <rect class="teal" x="1026" y="671" width="88" height="28"/>
        <rect class="teal" x="1237" y="671" width="88" height="28"/>
        <path class="blu" d="M1025 671V701H1115V671M1236 671V701H1326V671"/>
        <path class="grn thick" d="M1028 671V697H1112V671M1239 671V697H1323V671"/>
        <path class="pur" d="M906 671h2v8h-2zM951 671h2v8h-2zM1026 671h3v8h-3zM1100 694h2v6h-2zM1248 694h2v6h-2zM1399 671h2v8h-2zM1443 671h2v8h-2z"/>

        <g class="dim">
          <text x="1176" y="300">27800</text>
          <text x="929" y="716">3600</text><text x="997" y="716">3000</text><text x="1070" y="716">4200</text><text x="1144" y="716">3100</text><text x="1207" y="716">3100</text><text x="1281" y="716">4200</text><text x="1354" y="716">3000</text><text x="1421" y="716">3600</text>
          <text x="1175" y="746">27800</text>
          <text transform="translate(1511 387) rotate(-90)">2000</text>
          <text transform="translate(1511 438) rotate(-90)">2900</text>
          <text transform="translate(1511 497) rotate(-90)">2800</text>
          <text transform="translate(1511 534) rotate(-90)">500</text>
          <text transform="translate(1511 598) rotate(-90)">6200</text>
          <text transform="translate(1542 515) rotate(-90)">14400</text>
        </g>

        <g class="axes">
          <use href="#g-bub" x="877" y="246" width="32" height="32"/><text x="893" y="270">1</text>
          <use href="#g-bub" x="950" y="246" width="32" height="32"/><text x="966" y="270">2</text>
          <use href="#g-bub" x="1023" y="246" width="32" height="32"/><text x="1039" y="270">4</text>
          <use href="#g-bub" x="1088" y="246" width="32" height="32"/><text x="1104" y="270">5</text>
          <use href="#g-bub" x="1133" y="246" width="32" height="32"/><text x="1149" y="270">7</text>
          <use href="#g-bub" x="1186" y="246" width="32" height="32"/><text x="1202" y="270">8</text>
          <use href="#g-bub" x="1230" y="246" width="32" height="32"/><text x="1246" y="270">10</text>
          <use href="#g-bub" x="1295" y="246" width="32" height="32"/><text x="1311" y="270">11</text>
          <use href="#g-bub" x="1368" y="246" width="32" height="32"/><text x="1384" y="270">13</text>
          <use href="#g-bub" x="1441" y="246" width="32" height="32"/><text x="1457" y="270">14</text>

          <use href="#g-bub" x="877" y="752" width="32" height="32"/><text x="893" y="776">1</text>
          <use href="#g-bub" x="950" y="752" width="32" height="32"/><text x="966" y="776">2</text>
          <use href="#g-bub" x="1011" y="752" width="32" height="32"/><text x="1027" y="776">3</text>
          <use href="#g-bub" x="1096" y="752" width="32" height="32"/><text x="1112" y="776">6</text>
          <use href="#g-bub" x="1159" y="752" width="32" height="32"/><text x="1175" y="776">1/7</text>
          <use href="#g-bub" x="1222" y="752" width="32" height="32"/><text x="1238" y="776">9</text>
          <use href="#g-bub" x="1307" y="752" width="32" height="32"/><text x="1323" y="776">12</text>
          <use href="#g-bub" x="1368" y="752" width="32" height="32"/><text x="1384" y="776">13</text>
          <use href="#g-bub" x="1442" y="752" width="32" height="32"/><text x="1458" y="776">14</text>

          <use href="#g-bub" x="1548" y="352" width="32" height="32"/><text x="1564" y="376">F</text>
          <use href="#g-bub" x="1548" y="393" width="32" height="32"/><text x="1564" y="417">E</text>
          <use href="#g-bub" x="1548" y="452" width="32" height="32"/><text x="1564" y="476">D</text>
          <g class="lap"><use href="#g-bub" x="1548" y="508" width="32" height="32"/><text x="1564" y="532">C</text></g>
          <g class="lap"><use href="#g-bub" x="1548" y="520" width="32" height="32"/><text x="1564" y="544">B</text></g>
          <use href="#g-bub" x="1548" y="646" width="32" height="32"/><text x="1564" y="670">A</text>
          <use href="#g-bub" x="771" y="646" width="32" height="32"/>
        </g>
        <text class="yaxis" x="684" y="862">Y</text>
      </svg>
    </div>
  </main>

  <section class="dialog">
    <span class="glow g-a"></span><span class="glow g-b"></span><span class="glow g-c"></span><span class="glow g-d"></span>
    <div class="dlg-title"><span>生成吊筋</span><svg class="dlg-x" viewBox="0 0 14 14"><path d="M1 1l12 12M13 1L1 13"/></svg></div>
    <div class="dlg-body">
      <div class="dlg-left">
        <div class="sec">生成位置</div>
        <label class="crow first"><span class="cb on"></span>主梁与次梁相交，主梁上</label>
        <label class="crow"><span class="cb"></span>同截面的次梁相交，均设置</label>
        <div class="sec tight">钢筋信息</div>
        <div class="field first"><span class="flab">吊筋:</span><span class="inp">2C12</span></div>
        <div class="field"><span class="flab">次梁加筋:</span><span class="inp">6</span></div>
        <div class="sec mid">生成方式</div>
        <div class="radios"><label class="rad"><span class="rb"></span>选择图元</label><label class="rad"><span class="rb on"></span>选择楼层</label></div>
      </div>
      <div class="dlg-right">
        <div class="sec">楼层选择</div>
        <div class="floors">
          <div class="frow f1"><i class="td"></i><span class="tri"></span>全楼</div>
          <div class="frow f2"><i class="td"></i><span class="tri"></span>河南万宝A7#楼</div>
          <div class="frow f3"><span class="cb on"></span>屋面</div>
          <div class="frow f3"><span class="cb on"></span>机房层</div>
          <div class="frow f3"><span class="cb on"></span>第10层</div>
          <div class="frow f3"><span class="cb on"></span>第9层</div>
          <div class="frow f3"><span class="cb on"></span>第8层</div>
          <span class="fscroll"></span>
        </div>
      </div>
    </div>
    <div class="dlg-foot">
      <span class="btn">查看说明</span>
      <span class="btn primary">确定</span>
      <span class="btn">取消</span>
    </div>
  </section>

  <div class="pop"><span>遇到问题，搜一搜</span><span class="try">立即尝试</span></div>

  <svg class="scribble" viewBox="0 0 104 38"><path d="M66 4C50 0 28 2 14 8 3 13 0 22 6 28c10 8 38 9 60 5 16-3 28-7 34-17" fill="none" stroke="#e4141b" stroke-width="3.500" stroke-linecap="round"/></svg>
</div>
</body>
</html>
```
FILE: styles.css
```css
* { box-sizing: border-box; }
html, body { margin: 0; padding: 0; width: 1772px; height: 861px; overflow: hidden; background: #fff; }
body { font-family: "Noto Sans CJK SC", "Liberation Sans", sans-serif; font-size: 15px; color: #3c3c3c; line-height: 20px; }
i { font-style: normal; }
.sprite { position: absolute; width: 0; height: 0; }

.app { position: relative; width: 1772px; height: 861px; display: flex; flex-direction: column; overflow: hidden; filter: blur(.35px); }

/* top tabs */
.tabbar { height: 28px; flex: none; display: flex; align-items: center; padding-top: 2px; background: #fff; }
.logo { width: 52px; height: 26px; position: relative; }
.drop { position: absolute; left: 13px; top: -4px; width: 11px; height: 21px; }
.corner { position: absolute; left: 38px; top: 17px; border-style: solid; border-width: 0 0 5px 5px; border-color: transparent transparent #777 transparent; }
.tab { padding: 0 16.250px; height: 24px; line-height: 24px; white-space: nowrap; }
.tab.active { background: #1d8cf5; color: #fff; border-radius: 12px; }
.quick { position: absolute; left: 1357px; top: 5px; width: 400px; height: 20px; border: 1px solid #e6e6e6; display: flex; align-items: center; justify-content: space-between; padding: 0 8px 0 4px; color: #b0b0b0; font-size: 14px; }
.mag { width: 14px; height: 14px; fill: none; stroke: #aaa; stroke-width: 1.400; }

/* ribbon */
.ribbon { height: 123px; flex: none; display: flex; border-top: 1px solid #f0f0f0; border-bottom: 1px solid #ddd; white-space: nowrap; overflow: hidden; }
.group { height: 116px; border-right: 1px solid #dcdcdc; display: flex; flex-direction: column; flex: none; margin-top: 2px; }
.group .grid { height: 91px; padding-top: 1px; display: grid; grid-auto-flow: column; grid-template-rows: repeat(3, 29px); }
.lbl { height: 24px; line-height: 24px; text-align: center; color: #4a4a4a; }
.lbl.low { padding-top: 3px; }
.lbl.shift { padding-left: 76px; text-align: center; }
.g1 { width: 280px; }
.g1 .grid { grid-template-columns: 54px 125px 1fr; }
.g2 { width: 243px; padding-left: 11px; }
.g2 .grid { grid-template-columns: 99px 1fr; }
.g2 .lbl { padding-right: 5px; }
.g3 { width: 345px; padding-left: 10px; }
.g3 .grid { grid-template-columns: 83px 140px 1fr; }
.g4 { width: 297px; padding-left: 10px; }
.g4 .grid { grid-template-columns: 68px 68px 79px 1fr; }
.g5 { width: 83px; padding-left: 10px; }
.g5 .grid { grid-template-columns: 39px 1fr; }
.g5 .lbl { padding-right: 10px; }
.g6 { width: 126px; padding-left: 11px; }
.g6 .grid { grid-template-columns: 82px 1fr; }
.g7 { width: 97px; }
.g8 { width: 301px; padding-left: 11px; border-right: 0; }
.g8 .grid { grid-template-columns: 41px 29px 38px 125px 60px; }
.ri { display: flex; align-items: center; gap: 4px; height: 29px; overflow: visible; }
.ri.off { color: #c4c4c4; }
.ic { width: 20px; height: 20px; flex: none; }
.car { display: inline-block; margin-left: 8px; width: 0; height: 0; border-style: solid; border-width: 4px 3.500px 0; border-color: #888 transparent transparent; vertical-align: middle; }
.car.dark { margin-left: 10px; border-width: 5px 5px 0; border-top-color: #777; }
.car.wide-gap { margin-left: 18px; }
.ri.hl { background: #bcd6f0; height: 24px; margin: 2px 0 3px -1px; width: 95px; border-radius: 2px; }
.ri > .ic + .car { margin-left: 2px; }
.big { grid-row: 1 / 4; width: 50px; display: flex; flex-direction: column; align-items: center; }
.arrow { width: 30px; height: 36px; margin: 5px 0 9px; }
.big.wide { width: 79px; height: 91px; }
.smart { width: 40px; height: 38px; margin: 4px 0 6px 4px; }
.big.wide .car { margin: 11px 0 0; }
.g7 .lbl { padding-left: 4px; }

/* object selects */
.selectbar { height: 34px; flex: none; background: #f0f0f0; display: flex; gap: 5px; padding-top: 4px; border-bottom: 1px solid #e2e2e2; }
.sel { position: relative; width: 122.500px; height: 26px; line-height: 25px; background: #fff; border-radius: 4px; padding-left: 5px; }
.sel::after { content: ""; position: absolute; right: 6px; top: 11px; border-style: solid; border-width: 4px 3px 0; border-color: #666 transparent transparent; }
.sel.first { width: 116px; padding-left: 0; text-indent: -2px; border-radius: 0 4px 4px 0; }

/* workspace */
.work { flex: 1; min-height: 0; display: flex; background: #f0f0f0; }
.panel { background: #fff; overflow: hidden; }
.strip { height: 14px; background: #e5e5e5; display: flex; justify-content: flex-end; align-items: center; padding-right: 5px; }
.x { color: #aaa; font-size: 14px; line-height: 14px; }
.nav { width: 253px; flex: none; display: flex; flex-direction: column; margin-right: 6px; }
.navtitle { height: 28px; line-height: 28px; padding-left: 2px; background: #f2f2f2; color: #999; border-bottom: 1px solid #ddd; }
.navtools { height: 34px; display: flex; align-items: center; gap: 5px; padding-right: 2px; border-bottom: 2px solid #e8e8e8; }
.spark { width: 14px; height: 14px; margin: 0 auto 0 0; }
.tbtn { width: 30px; height: 27px; background: #c9e0f6; border-radius: 4px; display: flex; align-items: center; justify-content: center; }
.tbtn svg { width: 18px; height: 18px; }
.navbody { flex: 1; min-height: 0; display: flex; }
.navlist { width: 239px; padding-top: 4px; flex: none; }
.nrow { height: 30px; display: flex; align-items: center; padding-left: 20px; position: relative; white-space: nowrap; }
.nrow.sub { padding-left: 45px; gap: 10px; }
.tr, .td { width: 0; height: 0; border-style: solid; flex: none; }
.tr { border-width: 5px 0 5px 5px; border-color: transparent transparent transparent #aaa; position: absolute; left: 6px; top: 10px; }
.td { border-width: 5px 4.500px 0; border-color: #999 transparent transparent; position: absolute; left: 4px; top: 13px; }
.pad { width: 12px; height: 16px; margin-left: 4px; }
.selrow { position: relative; width: 139px; height: 26px; margin-left: -4px; padding-left: 4px; display: flex; align-items: center; gap: 10px; background: #c3daf1; border-radius: 3px; }
.redline { position: absolute; left: 4px; top: 18px; width: 118px; height: 3px; background: #e4141b; border-radius: 2px; }
.navscroll { width: 9px; padding-top: 21px; flex: none; display: flex; }
.thumb { display: block; width: 100%; background: #c9c9c9; border-radius: 5px; }
.navscroll .thumb { height: 600px; }

.midcol { width: 356px; flex: none; display: flex; flex-direction: column; gap: 6px; }
.comp { height: 412px; flex: none; display: flex; flex-direction: column; border-right: 1px solid #ddd; border-bottom: 1px solid #ddd; }
.props { flex: 1; min-height: 0; display: flex; flex-direction: column; border-right: 1px solid #ddd; }
.tabs { height: 29px; flex: none; display: flex; background: #f2f2f2; border-bottom: 1px solid #ddd; }
.tabs.tall { height: 31px; }
.ptab { width: 81px; text-align: center; line-height: 30px; background: #dfdfdf; color: #999; }
.ptab.on { background: #f2f2f2; color: #333; font-weight: 700; width: 81px; margin-right: 1px; }
.ptools { height: 34px; flex: none; display: flex; align-items: center; padding-left: 6px; position: relative; border-bottom: 1px solid #eee; }
.pt { display: inline-flex; align-items: center; gap: 6px; margin-right: 13px; white-space: nowrap; }
.pt .car { margin: 0 -3px 0 6px; }
.more { position: absolute; right: 2px; top: 4px; width: 13px; height: 25px; border: 1px solid #eee; border-radius: 5px; display: flex; align-items: center; justify-content: center; }
.more svg { width: 9px; height: 7px; }
.psearch { height: 24px; flex: none; display: flex; align-items: center; justify-content: space-between; padding: 0 8px 0 3px; color: #b4b4b4; border-bottom: 1px solid #ddd; }
.ptree { flex: 1; min-height: 0; display: flex; }
.treelist { flex: 1; padding-top: 4px; }
.trow { height: 30px; display: flex; align-items: center; position: relative; white-space: nowrap; }
.l1 { padding-left: 30px; }
.l1 .td { left: 18px; }
.l2 { padding-left: 55px; }
.l2 .td { left: 42px; }
.l3 { padding-left: 76px; }
.kl { display: block; width: 78px; height: 26px; line-height: 26px; padding-left: 4px; border-radius: 3px; }
.sel-kl { background: #c3daf1; }
.treescroll { width: 10px; margin-right: 3px; padding-top: 21px; flex: none; }
.treescroll .thumb { height: 61px; }

.propbody { flex: 1; min-height: 0; display: flex; overflow: hidden; }
.ptable { width: 336px; table-layout: fixed; border-collapse: collapse; flex: none; align-self: flex-start; }
.ptable .c1 { width: 28px; } .ptable .c2 { width: 127px; } .ptable .c3 { width: 131px; } .ptable .c4 { width: 50px; }
.ptable th, .ptable td { border: 2px solid #e8e8e8; padding: 0 0 0 4px; height: 26px; font-weight: 400; white-space: nowrap; overflow: hidden; }
.ptable th { text-align: center; height: 25px; padding: 0; }
.ptable tr > :first-child { border-left: 0; }
.ptable thead th { border-top: 0; }
.ptable .n { background: #f0f0f0; text-align: center; padding: 0; }
.ptable td:last-child { text-align: center; padding: 0; }
.link { color: #2a62e6; }
.pcb { display: inline-block; width: 17px; height: 17px; border: 1px solid #999; border-radius: 3px; background: #fff; vertical-align: middle; }
.propscroll { width: 10px; margin-left: 6px; padding-top: 18px; flex: none; }
.propscroll .thumb { height: 113px; }

.split { width: 7px; flex: none; padding: 329px 0 0 2px; }
.handle { display: block; width: 5px; height: 126px; background: #555; }
.canvas { flex: 1; min-width: 0; background: #000; overflow: hidden; border-left: 1px solid #444; margin-left: -1px; }
.cad { display: block; }
.ln { fill: none; stroke: #0b6a0b; stroke-width: 1.300; }
.gray { fill: #666; }
.grn { fill: none; stroke: #21c521; stroke-width: 3; }
.grn.thick { stroke-width: 3.500; }
.pur { fill: #7a14d6; }
.red { fill: none; stroke: #8c1313; stroke-width: 2; }
.redf { fill: #e10f0f; }
.teal { fill: #00756a; }
.blu { fill: #3a3ad8; stroke: #3a3ad8; stroke-width: 2; fill-opacity: 0; }
.dim text, .axes text { font-family: "Liberation Sans", sans-serif; font-size: 22px; fill: #dcdcdc; text-anchor: middle; }
.axes text { fill: #eee; }
.yaxis { font-family: "Liberation Sans", sans-serif; font-size: 13px; fill: #22cc22; text-anchor: middle; }

/* dialog */
.dialog { position: absolute; left: 755px; top: 292px; width: 700px; height: 379px; background: #e9e9e9; box-shadow: 0 0 2px rgba(0,0,0,.4); overflow: hidden; padding: 0 15px; display: flex; flex-direction: column; color: #444; }
.glow { position: absolute; filter: blur(12px); background: #e3f6fc; }
.g-a { left: 140px; top: 205px; width: 128px; height: 190px; }
.g-b { left: 283px; top: 165px; width: 62px; height: 230px; }
.g-c { left: 365px; top: 300px; width: 88px; height: 90px; }
.g-d { left: 572px; top: 300px; width: 115px; height: 90px; }
.dlg-title { position: relative; height: 50px; flex: none; display: flex; align-items: center; justify-content: space-between; font-size: 16px; padding-right: 1px; }
.dlg-x { width: 14px; height: 14px; fill: none; stroke: #888; stroke-width: 1.100; margin-right: 1px; }
.dlg-body { position: relative; height: 264px; flex: none; display: flex; gap: 8px; padding-left: 1px; }
.dlg-left { width: 341px; flex: none; }
.dlg-right { flex: 1; padding-right: 0; }
.sec { display: flex; align-items: center; gap: 4px; height: 22px; white-space: nowrap; }
.sec::after { content: ""; flex: 1; height: 1px; background: #cfcfcf; }
.sec.tight { margin-top: 4px; }
.sec.mid { margin-top: 9px; }
.crow { display: flex; align-items: center; gap: 4px; height: 28px; }
.crow.first { margin-top: 4px; }
.cb { position: relative; display: inline-block; flex: none; width: 18px; height: 18px; border-radius: 3px; background: #fff; border: 1px solid #bbb; }
.cb.on { background: #2b7fe2; border-color: #2b7fe2; }
.cb.on::after { content: ""; position: absolute; left: 5px; top: 2px; width: 5px; height: 10px; border: solid #fff; border-width: 0 2px 2px 0; transform: rotate(40deg); }
.field { display: flex; align-items: center; height: 30px; margin-top: 10px; }
.field.first { margin-top: 8px; }
.flab { width: 71px; flex: none; }
.inp { flex: 1; height: 30px; line-height: 28px; background: #fff; border: 1px solid #d6d6d6; border-radius: 3px; padding-left: 2px; color: #555; }
.radios { display: flex; margin-top: 4px; }
.rad { width: 175px; height: 26px; display: flex; align-items: center; gap: 6px; }
.rb { position: relative; width: 17px; height: 17px; border-radius: 50%; background: #fff; border: 1px solid #bbb; flex: none; }
.rb.on::after { content: ""; position: absolute; left: 4px; top: 4px; width: 7px; height: 7px; border-radius: 50%; background: #2b7fe2; }
.floors { position: relative; height: 212px; margin-top: 10px; background: #fff; overflow: hidden; padding-top: 1px; }
.frow { position: relative; height: 30px; display: flex; align-items: center; white-space: nowrap; }
.f1 { padding-left: 31px; } .f2 { padding-left: 56px; } .f3 { padding-left: 80px; gap: 9px; }
.f1 .td { left: 13px; top: 13px; } .f2 .td { left: 37px; top: 13px; }
.tri { width: 16px; height: 17px; margin-right: 9px; background: #8fc2f8; border: 2px solid #e6e6e6; outline: 1px solid #999; outline-offset: -1px; border-radius: 2px; flex: none; }
.fscroll { position: absolute; right: 4px; top: 18px; width: 10px; height: 76px; background: #c9c9c9; border-radius: 5px; }
.dlg-foot { position: relative; border-top: 1px solid #cfcfcf; flex: none; height: 65px; display: flex; align-items: flex-start; padding: 17px 0 0 1px; margin-left: 0; gap: 21px; }
.btn { width: 100px; height: 31px; line-height: 29px; text-align: center; background: #fff; border: 1px solid #dadada; border-radius: 4px; }
.btn:first-child { margin-right: auto; }
.btn.primary { background: #2c80e2; border-color: #2c80e2; color: #fff; }

/* tip */
.pop { position: absolute; left: 1101px; top: 0; width: 243px; height: 35px; background: #0a8dff; border-radius: 0 0 3px 3px; color: #fff; display: flex; padding: 1px 0 0 10px; }
.pop::after { content: ""; position: absolute; right: -7px; top: 9px; border-style: solid; border-width: 7px 0 7px 7px; border-color: transparent transparent transparent #0a8dff; }
.pop span:first-child { line-height: 26px; }
.try { margin-left: 22px; width: 70px; height: 26px; line-height: 26px; background: #fff; color: #1683ef; text-align: center; border-radius: 3px; }
.scribble { position: absolute; left: 1577px; top: 58px; width: 104px; height: 38px; }
```
